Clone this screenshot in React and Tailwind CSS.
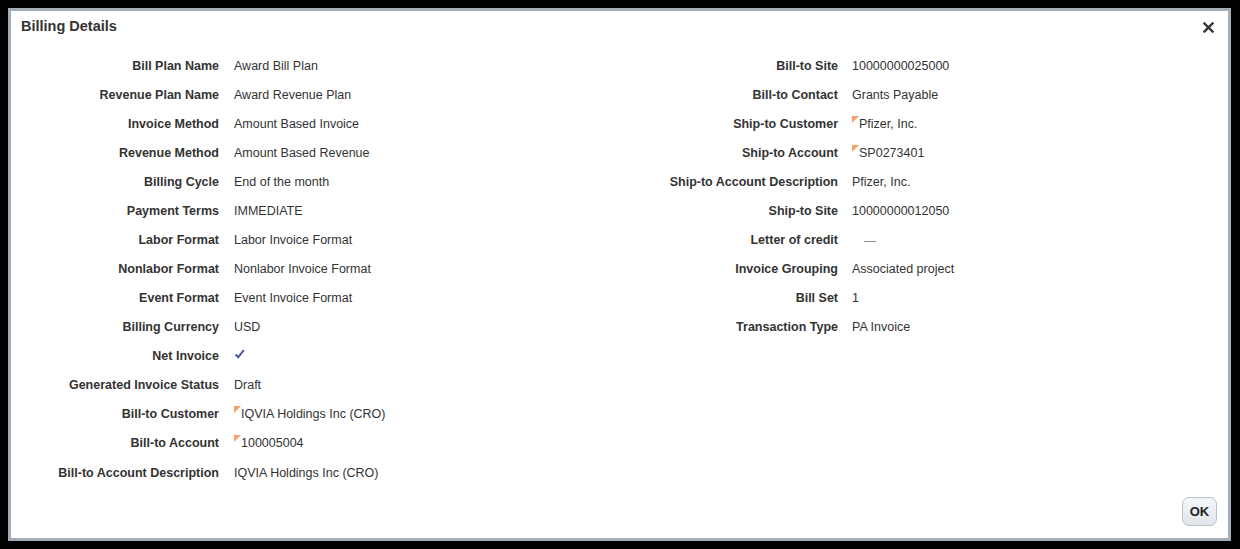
const LEFT_ROWS = [
  ['Bill Plan Name', 'Award Bill Plan'],
  ['Revenue Plan Name', 'Award Revenue Plan'],
  ['Invoice Method', 'Amount Based Invoice'],
  ['Revenue Method', 'Amount Based Revenue'],
  ['Billing Cycle', 'End of the month'],
  ['Payment Terms', 'IMMEDIATE'],
  ['Labor Format', 'Labor Invoice Format'],
  ['Nonlabor Format', 'Nonlabor Invoice Format'],
  ['Event Format', 'Event Invoice Format'],
  ['Billing Currency', 'USD'],
  ['Net Invoice', 'check'],
  ['Generated Invoice Status', 'Draft'],
  ['Bill-to Customer', 'IQVIA Holdings Inc (CRO)', 'flag'],
  ['Bill-to Account', '100005004', 'flag'],
  ['Bill-to Account Description', 'IQVIA Holdings Inc (CRO)'],
]

const RIGHT_ROWS = [
  ['Bill-to Site', '10000000025000'],
  ['Bill-to Contact', 'Grants Payable'],
  ['Ship-to Customer', 'Pfizer, Inc.', 'flag'],
  ['Ship-to Account', 'SP0273401', 'flag'],
  ['Ship-to Account Description', 'Pfizer, Inc.'],
  ['Ship-to Site', '10000000012050'],
  ['Letter of credit', 'dash'],
  ['Invoice Grouping', 'Associated project'],
  ['Bill Set', '1'],
  ['Transaction Type', 'PA Invoice'],
]

function Flag() {
  return (
    <svg width="7" height="7" viewBox="0 0 7 7" className="self-start mt-[1px]">
      <polygon points="0,0 7,0 0,7" fill="#f6a06a" />
    </svg>
  )
}

function Value({ value, flag }) {
  if (value === 'check') {
    return (
      <svg width="11" height="10" viewBox="0 0 11 10" className="-mt-[6px]">
        <path d="M1.5 5.5 L4.2 8.2 L9.8 1.2" fill="none" stroke="#4b5a9e" strokeWidth="2" />
      </svg>
    )
  }
  if (value === 'dash') {
    return <span className="ml-3 inline-block w-[12px] h-px bg-[#8a8a8a] mt-[2px]" />
  }
  return (
    <span className="flex items-center">
      {flag && <Flag />}
      {value}
    </span>
  )
}

function Rows({ rows, labelWidth, gap }) {
  return (
    <div className="flex flex-col">
      {rows.map(([label, value, flag]) => (
        <div key={label} className="flex items-center h-[29.07px]">
          <div
            className={`${labelWidth} text-right font-bold text-[#333] shrink-0`}
          >
            {label}
          </div>
          <div className={`${gap} flex items-center text-[#333]`}>
            <Value value={value} flag={flag} />
          </div>
        </div>
      ))}
    </div>
  )
}

export default function App() {
  return (
    <div
      className="w-[1240px] h-[549px] bg-black pt-2 pb-2 pl-2 pr-[9px]"
      style={{ fontFamily: '"Liberation Sans", Arial, sans-serif' }}
    >
      <div className="h-full flex flex-col bg-white border-[3px] border-[#a3adb7] text-[12.5px]">
        {/* header */}
        <div className="h-[28px] pt-[4px] flex items-center justify-between pl-[10px] pr-[14px]">
          <h1 className="text-[14.5px] font-bold text-[#333]">Billing Details</h1>
          <svg width="11" height="11" viewBox="0 0 11 11">
            <path d="M1.5 1.5 L9.5 9.5 M9.5 1.5 L1.5 9.5" stroke="#333" strokeWidth="2.4" strokeLinecap="square" />
          </svg>
        </div>

        {/* body */}
        <div className="flex-1 flex pt-[12.5px]">
          <div className="w-[609px]">
            <Rows rows={LEFT_ROWS} labelWidth="w-[208px]" gap="pl-[15px]" />
          </div>
          <div>
            <Rows rows={RIGHT_ROWS} labelWidth="w-[218px]" gap="pl-[14px]" />
          </div>
        </div>

        {/* footer */}
        <div className="flex justify-end pr-[11px] pb-[12px]">
          <button className="w-[35px] h-[29px] rounded-[7px] border border-[#b7c1cb] bg-gradient-to-b from-[#f5f7f9] to-[#dfe5eb] text-[13px] font-bold text-[#222]">
            OK
          </button>
        </div>
      </div>
    </div>
  )
}
